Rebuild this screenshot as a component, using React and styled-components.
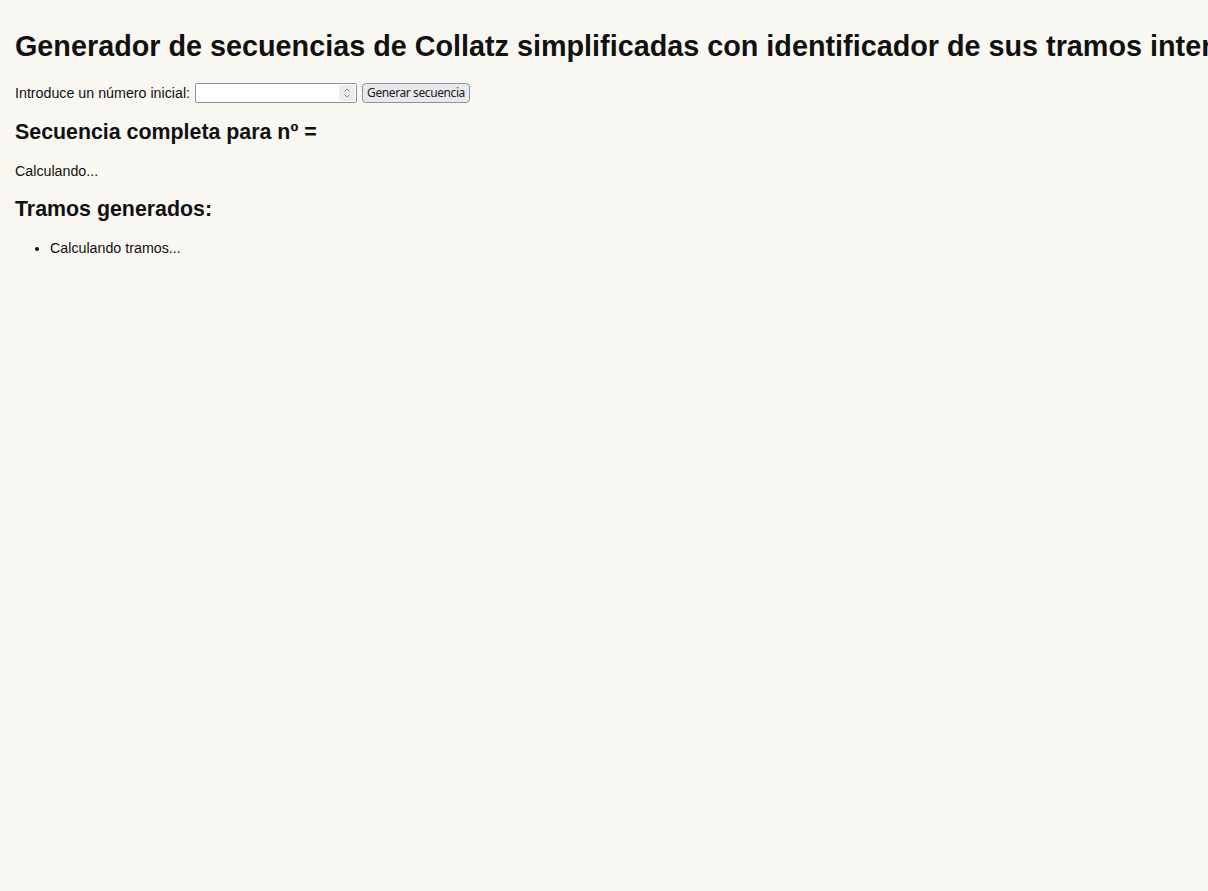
import React from 'react';
import styled, { createGlobalStyle } from 'styled-components';

const GlobalStyle = createGlobalStyle`
  html, body {
    margin: 0;
    background: #f8f7f1;
  }
  body {
    padding: 11px 15px 10px;
    font-family: "Liberation Sans", Arial, sans-serif;
    font-size: 14.25px;
    color: #111;
  }
`;

const Title = styled.h1`
  font-size: 2.02em;
  margin: 0.67em 0;
  white-space: nowrap;
`;

const Form = styled.form`
  display: flex;
  align-items: center;
  gap: 5px;
  height: 20px;
`;

const Field = styled.div`
  display: flex;
  align-items: stretch;
  width: 160px;
  height: 18px;
  border: 1px solid #8f8f9d;
  border-radius: 2px;
  background: #fff;
  overflow: hidden;
`;

const NumberInput = styled.input`
  flex: 1;
  min-width: 0;
  margin: 0;
  padding: 0 4px;
  border: none;
  outline: none;
  background: transparent;
  font: 13px "Noto Sans", sans-serif;
  -moz-appearance: textfield;

  &::-webkit-inner-spin-button,
  &::-webkit-outer-spin-button {
    -webkit-appearance: none;
    margin: 0;
  }
`;

const Spinner = styled.span`
  display: flex;
  align-items: center;
  justify-content: center;
  width: 16px;
  margin: 1px 1px 1px 0;
  background: #ececec;
  border-radius: 2px;
`;

const Button = styled.button`
  margin: 0;
  height: 20px;
  padding: 0 4px;
  border: 1px solid #8f8f9d;
  border-radius: 4px;
  background: #e9e9ed;
  color: #1b1b1b;
  font: 12px "Noto Sans", sans-serif;
  letter-spacing: -0.4px;
  line-height: 18px;
`;

const Subtitle = styled.h2`
  font-size: 1.5em;
  margin: 0.83em 0;
`;

const Text = styled.p`
  margin: 1em 0;
`;

const List = styled.ul`
  margin: 1.05em 0;
  padding-left: 35px;

  li::marker {
    font-size: 0.9em;
  }
`;

function SpinIcon() {
  return (
    <svg width="8" height="12" viewBox="0 0 8 12" fill="none" stroke="#8a8a8a" strokeWidth="1">
      <path d="M1.5 4.5 L4 2 L6.5 4.5" />
      <path d="M1.5 7.5 L4 10 L6.5 7.5" />
    </svg>
  );
}

export default function App() {
  return (
    <>
      <GlobalStyle />
      <Title>Generador de secuencias de Collatz simplificadas con identificador de sus tramos internos</Title>
      <Form onSubmit={e => e.preventDefault()}>
        <label htmlFor="num">Introduce un número inicial:</label>
        <Field>
          <NumberInput id="num" type="number" />
          <Spinner><SpinIcon /></Spinner>
        </Field>
        <Button type="submit">Generar secuencia</Button>
      </Form>
      <Subtitle>Secuencia completa para nº = </Subtitle>
      <Text>Calculando...</Text>
      <Subtitle>Tramos generados:</Subtitle>
      <List>
        <li>Calculando tramos...</li>
      </List>
    </>
  );
}
